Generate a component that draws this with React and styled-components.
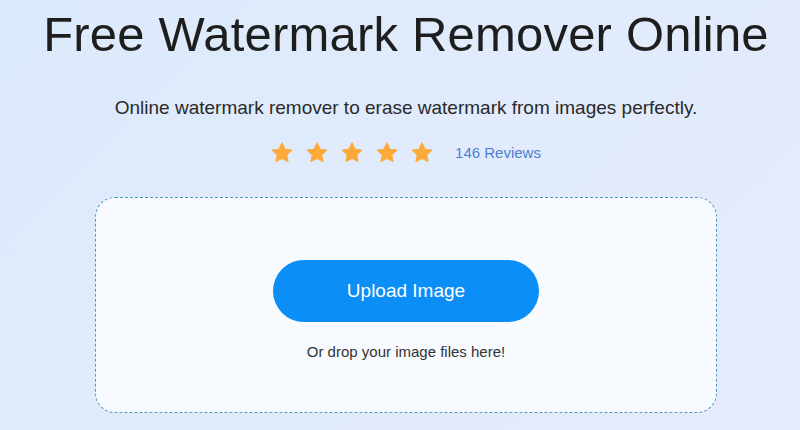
import React from 'react'
import styled, { createGlobalStyle } from 'styled-components'

const GlobalStyle = createGlobalStyle`
html, body {
  margin:0;
  padding:0;
}
body {
  width:800px;
  height:430px;
  overflow:hidden;
  font-family: "Liberation Sans", Arial, sans-serif;
  background: linear-gradient(135deg, #dbeafb 0%, #e1ebfb 50%, #e6ebfb 100%);
}
`

function Star() {
  return (
    <svg width="22" height="21" viewBox="0 0 24 23">
      <path
        d="M12 1.2l3.2 6.8 7.3.9-5.4 5.1 1.4 7.3L12 17.7l-6.5 3.6 1.4-7.3L1.5 8.9l7.3-.9z"
        fill="#fcaa3a"
        stroke="#fcaa3a"
        strokeWidth="1.4"
        strokeLinejoin="round"
      />
    </svg>
  )
}

export default function App() {
  return (
    <Page>
      <GlobalStyle />
      <Title>Free Watermark Remover Online</Title>
      <Subtitle>Online watermark remover to erase watermark from images perfectly.</Subtitle>
      <Rating>
        <Stars>
          <Star />
          <Star />
          <Star />
          <Star />
          <Star />
        </Stars>
        <Reviews>146 Reviews</Reviews>
      </Rating>
      <DropZone>
        <UploadButton>Upload Image</UploadButton>
        <Hint>Or drop your image files here!</Hint>
      </DropZone>
    </Page>
  )
}

const Page = styled.div`
width:800px;
height:430px;
box-sizing:border-box;
padding-left:12px;
display:flex;
flex-direction:column;
align-items:center;
`
const Title = styled.h1`
margin:0;
padding-top:8px;
font-weight:normal;
font-size:49px;
line-height:52px;
color:#1e1e1e;
letter-spacing:0.2px;
`
const Subtitle = styled.p`
margin:37px 0 0;
font-size:19px;
line-height:22px;
color:#2a2a2a;
`
const Rating = styled.div`
margin-top:23px;
display:flex;
align-items:center;
gap:22px;
`
const Stars = styled.div`
display:flex;
gap:13px;
`
const Reviews = styled.span`
font-size:15px;
color:#4b7fd6;
`
const DropZone = styled.div`
margin-top:34px;
width:622px;
height:216px;
box-sizing:border-box;
border:1px dashed #4f98c4;
border-radius:20px;
background:#f7fbff;
display:flex;
flex-direction:column;
align-items:center;
padding-top:62px;
`
const UploadButton = styled.button`
width:266px;
height:62px;
border:none;
border-radius:31px;
background:#0b8ef6;
color:#fff;
font-family:"Liberation Sans", Arial, sans-serif;
font-size:19px;
cursor:pointer;
`
const Hint = styled.div`
margin-top:21px;
font-size:15px;
color:#333;
`
